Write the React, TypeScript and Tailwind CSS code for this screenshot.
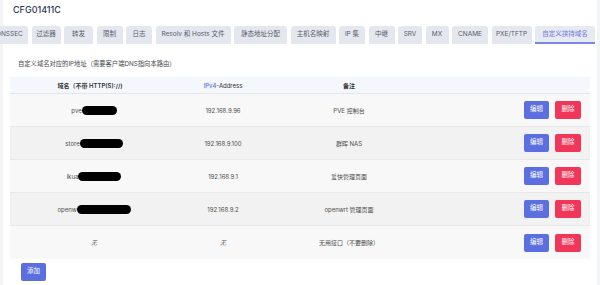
import React from "react";

const tabs: { label: string; w: string; active?: boolean }[] = [
  { label: "DNSSEC", w: "w-[37px] ml-[-9px]" },
  { label: "过滤器", w: "w-[29px]" },
  { label: "转发", w: "w-[29px]" },
  { label: "限制", w: "w-[26px]" },
  { label: "日志", w: "w-[26px]" },
  { label: "Resolv 和 Hosts 文件", w: "w-[75px]" },
  { label: "静态地址分配", w: "w-[53px]" },
  { label: "主机名映射", w: "w-[45px]" },
  { label: "IP 集", w: "w-[26px]" },
  { label: "中继", w: "w-[26px]" },
  { label: "SRV", w: "w-[24px]" },
  { label: "MX", w: "w-[23px]" },
  { label: "CNAME", w: "w-[36px]" },
  { label: "PXE/TFTP", w: "w-[40px]" },
  { label: "自定义挟持域名", w: "w-[60px]", active: true },
];

type Row = {
  prefix: string;
  blob: number;
  ip: string;
  note: string;
  bg: string;
  none?: boolean;
};

const rows: Row[] = [
  { prefix: "pve", blob: 35, ip: "192.168.9.96", note: "PVE 控制台", bg: "bg-[#f8f8f8]" },
  { prefix: "store", blob: 43, ip: "192.168.9.100", note: "群晖 NAS", bg: "bg-[#f2f2f2]" },
  { prefix: "ikua", blob: 43, ip: "192.168.9.1", note: "爱快管理页面", bg: "bg-[#f8f8f8]" },
  { prefix: "openw", blob: 54, ip: "192.168.9.2", note: "openwrt 管理页面", bg: "bg-[#f2f2f2]" },
  { prefix: "", blob: 0, ip: "无", note: "无用接口（不要删除）", bg: "bg-[#f8f8f8]", none: true },
];

export default function App() {
  return (
    <div
      className="w-[600px] h-[285px] bg-white flex overflow-hidden text-[#444]"
      style={{ fontFamily: 'Inter, "Noto Sans CJK SC", sans-serif' }}
    >
      <div className="w-[3px] bg-[#f3f4f6] shrink-0" />
      <div className="flex-1 flex flex-col min-w-0">
        <div className="pl-[10px] pt-[4px] h-[22px] text-[9px] font-medium text-[#2f3b57] leading-[12px]">
          CFG01411C
        </div>
        <div className="flex gap-[3.5px] overflow-hidden ml-[-3px] h-[18px] mt-[4px]">
          {tabs.map((t) => (
            <div
              key={t.label}
              className={`${t.w} shrink-0 h-[18px] flex items-center justify-center rounded-t-[3px] whitespace-nowrap text-[6.5px] ${
                t.active
                  ? "bg-[#e6eaf1] text-[#6d75e2] border-b-[2px] border-[#7c85ea] pt-[2px]"
                  : "bg-[#e4e8ee] text-[#555c6a]"
              }`}
            >
              {t.label}
            </div>
          ))}
        </div>
        <div className="pl-[15px] mt-[16px] text-[6.3px] text-[#4a4a4a] leading-[9px]">
          自定义域名对应的IP地址（需要客户端DNS指向本路由）
        </div>
        <div className="ml-[7px] mr-[7px] mt-[8px] text-[6px]">
          <div className="grid grid-cols-[160px_106px_146px_1fr] h-[17px] items-center bg-[#f4f7fb] border-b border-[#e3e7ec] font-semibold text-[#333]">
            <div className="text-center">域名（不带 HTTP(S)://)</div>
            <div className="text-center font-normal">
              <span className="text-[#4a63d8] bg-[#eef2fd]">IPv4</span>-Address
            </div>
            <div className="text-center">备注</div>
            <div />
          </div>
          {rows.map((r, i) => (
            <div
              key={i}
              className={`grid grid-cols-[160px_106px_146px_1fr] h-[33px] items-center ${r.bg} ${
                i < rows.length - 1 ? "border-b border-[#e8e8e8]" : ""
              } text-[#4d4d4d]`}
            >
              <div className="flex justify-center items-center pl-[8px]">
                {r.none ? (
                  <span className="italic">无</span>
                ) : (
                  <>
                    <span>{r.prefix}</span>
                    <span
                      className="inline-block h-[9px] bg-black rounded-full"
                      style={{ width: r.blob }}
                    />
                  </>
                )}
              </div>
              <div className={`text-center ${r.none ? "italic" : ""}`}>{r.ip}</div>
              <div className="text-center">{r.note}</div>
              <div className="flex justify-end gap-[6px] pr-[9px]">
                <button className="w-[25px] h-[18px] rounded-[2px] bg-[#5c6fe0] text-white text-[6.5px] flex items-center justify-center">
                  编辑
                </button>
                <button className="w-[26px] h-[18px] rounded-[2px] bg-[#f1365a] text-white text-[6.5px] flex items-center justify-center">
                  删除
                </button>
              </div>
            </div>
          ))}
          <div className="pl-[11px] pt-[4px]">
            <button className="w-[25px] h-[18px] rounded-[2px] bg-[#5c6fe0] text-white text-[6.5px] flex items-center justify-center">
              添加
            </button>
          </div>
        </div>
      </div>
      <div className="w-[3px] bg-[#f3f4f6] shrink-0" />
    </div>
  );
}
